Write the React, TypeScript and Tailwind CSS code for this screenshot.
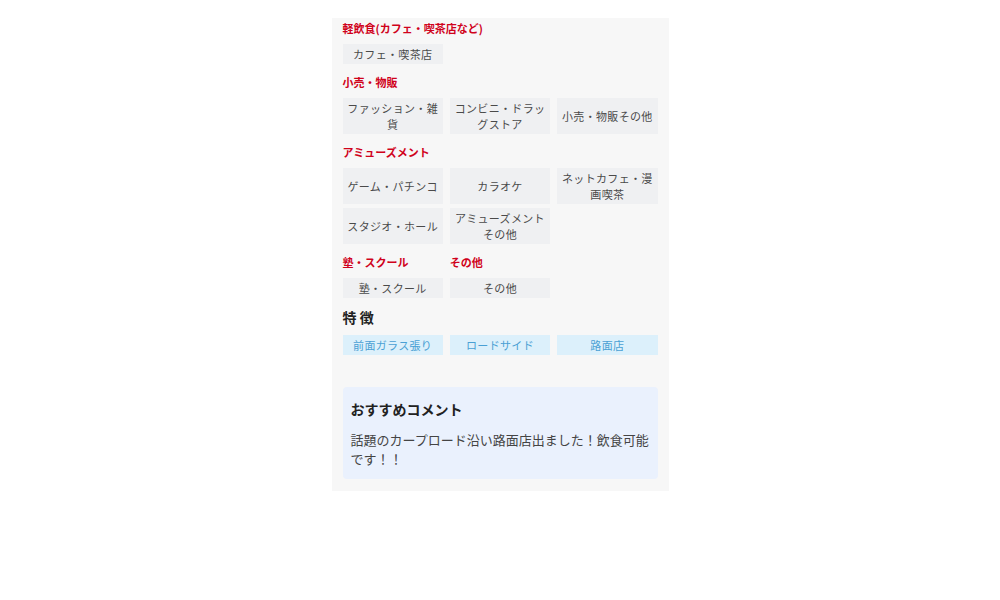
const FONT = { fontFamily: '"Noto Sans CJK JP", "Noto Sans", sans-serif' }

type Group = { title: string; tags: string[] }

const Heading = ({ children }: { children: string }) => (
  <h3 className="text-[11px] leading-4 font-bold text-[#d0021b]">{children}</h3>
)

const Tag = ({ label, tone = 'gray' }: { label: string; tone?: 'gray' | 'blue' }) => (
  <li
    className={`flex items-center justify-center text-center px-1 py-[2px] text-[11px] leading-4 tracking-[0.03em] ${
      tone === 'blue' ? 'bg-[#dcf0fb] text-[#4aa0d4]' : 'bg-[#eff0f2] text-[#4a4a4a]'
    }`}
  >
    {label}
  </li>
)

const GROUPS: Group[] = [
  { title: '軽飲食(カフェ・喫茶店など)', tags: ['カフェ・喫茶店'] },
  { title: '小売・物販', tags: ['ファッション・雑貨', 'コンビニ・ドラッグストア', '小売・物販その他'] },
  { title: 'アミューズメント', tags: ['ゲーム・パチンコ', 'カラオケ', 'ネットカフェ・漫画喫茶', 'スタジオ・ホール', 'アミューズメントその他'] },
]

const SMALL: Group[] = [
  { title: '塾・スクール', tags: ['塾・スクール'] },
  { title: 'その他', tags: ['その他'] },
]

export default function App() {
  return (
    <div className="min-h-[600px] bg-white pt-[18px]" style={FONT}>
      <section className="mx-auto w-[337px] bg-[#f7f7f7] px-[11px] pt-[2px] pb-3">
        {GROUPS.map((g, i) => (
          <div key={g.title} className={i === 0 ? '' : 'mt-[10px]'}>
            <Heading>{g.title}</Heading>
            <ul className="mt-2 grid grid-cols-3 gap-x-[7px] gap-y-1">
              {g.tags.map((t) => <Tag key={t} label={t} />)}
            </ul>
          </div>
        ))}

        <div className="mt-[10px] grid grid-cols-3 gap-x-[7px]">
          {SMALL.map((g) => (
            <div key={g.title}>
              <Heading>{g.title}</Heading>
              <ul className="mt-2 grid">
                {g.tags.map((t) => <Tag key={t} label={t} />)}
              </ul>
            </div>
          ))}
        </div>

        <h3 className="mt-[9px] text-[14px] leading-5 font-bold text-[#222]">特 徴</h3>
        <ul className="mt-2 grid grid-cols-3 gap-x-[7px]">
          {['前面ガラス張り', 'ロードサイド', '路面店'].map((t) => <Tag key={t} label={t} tone="blue" />)}
        </ul>

        <div className="mt-8 rounded bg-[#eaf1fd] px-2 pt-3 pb-[11px]">
          <h4 className="text-[14px] leading-5 font-bold text-[#222]">おすすめコメント</h4>
          <p className="mt-[11px] text-[13px] leading-[19px] text-[#444]">
            話題のカープロード沿い路面店出ました！飲食可能です！！
          </p>
        </div>
      </section>
    </div>
  )
}
